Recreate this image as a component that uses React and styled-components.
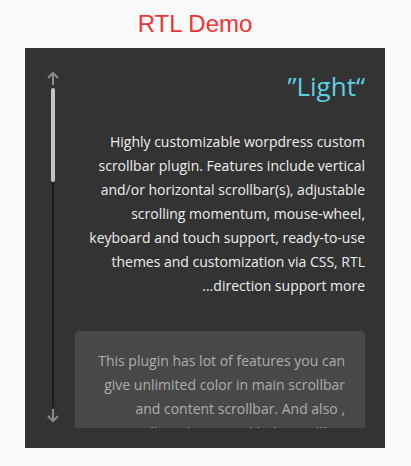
import styled, { createGlobalStyle } from 'styled-components';

const GlobalStyle = createGlobalStyle`
  body {
    margin: 0;
    background: #f9f9f9;
    font-family: "Open Sans", "Liberation Sans", sans-serif;
  }
`;

const Page = styled.div`
  width: 360px;
  margin-left: 25px;
  padding-top: 10px;
`;

const Title = styled.h1`
  margin: 0 0 10px;
  padding-right: 20px;
  font-family: "Liberation Sans", Arial, sans-serif;
  font-size: 24px;
  font-weight: 400;
  line-height: 28px;
  color: #ee3333;
  text-align: center;
`;

const Panel = styled.div`
  display: flex;
  height: 400px;
  padding: 10px 20px 20px 0;
  box-sizing: border-box;
  background: #333333;
  overflow: hidden;
`;

const ScrollBar = styled.div`
  display: flex;
  flex-direction: column;
  align-items: center;
  width: 16px;
  margin: 13px 14px 5px 20px;
`;

const Arrow = styled.svg`
  flex: none;
  width: 14px;
  height: 15px;
  color: #8a8a8a;
`;

const Rail = styled.div`
  position: relative;
  flex: 1;
  width: 2px;
  margin: 2px 0 1px;
  background: #1c1c1c;
`;

const Thumb = styled.div`
  position: absolute;
  top: 0;
  left: -1px;
  width: 4px;
  height: 94px;
  border-radius: 2px;
  background: #c4c4c4;
`;

const Viewport = styled.div`
  flex: 1;
  padding-top: 10px;
  overflow: hidden;
  direction: rtl;
  text-align: right;
`;

const Heading = styled.h2`
  margin: 0 0 26px;
  font-size: 26px;
  font-weight: 400;
  line-height: 36px;
  color: #5bd0e2;
`;

const Text = styled.p`
  margin: 0;
  font-size: 14px;
  line-height: 24px;
  color: ${(p) => p.$color || '#eeeeee'};
`;

const Box = styled.div`
  margin-top: 33px;
  padding: 18px 20px;
  border-radius: 4px;
  background: #484848;
`;

const ArrowIcon = ({ down }) => (
  <Arrow viewBox="0 0 14 15" fill="none" stroke="currentColor" strokeWidth="2">
    {down ? (
      <>
        <path d="M7 1v12" />
        <path d="M2 8l5 5 5-5" />
      </>
    ) : (
      <>
        <path d="M7 14V2" />
        <path d="M2 7l5-5 5 5" />
      </>
    )}
  </Arrow>
);

const App = () => {
  return (
    <>
      <GlobalStyle />
      <Page>
        <Title>RTL Demo</Title>
        <Panel>
          <ScrollBar>
            <ArrowIcon />
            <Rail>
              <Thumb />
            </Rail>
            <ArrowIcon down />
          </ScrollBar>
          <Viewport>
            <Heading>“Light”</Heading>
            <Text>
              Highly customizable worpdress custom scrollbar plugin. Features
              include vertical and/or horizontal scrollbar(s), adjustable
              scrolling momentum, mouse-wheel, keyboard and touch support,
              ready-to-use themes and customization via CSS, RTL direction
              support more...
            </Text>
            <Box>
              <Text $color="#adadad">
                This plugin has lot of features you can give unlimited color in
                main scrollbar and content scrollbar. And also ,{'\u200E'}
                <br />
                scroll to, theme and hide scrollbar when not needed, auto hide
                and many more options.
              </Text>
            </Box>
          </Viewport>
        </Panel>
      </Page>
    </>
  );
};

export default App;
